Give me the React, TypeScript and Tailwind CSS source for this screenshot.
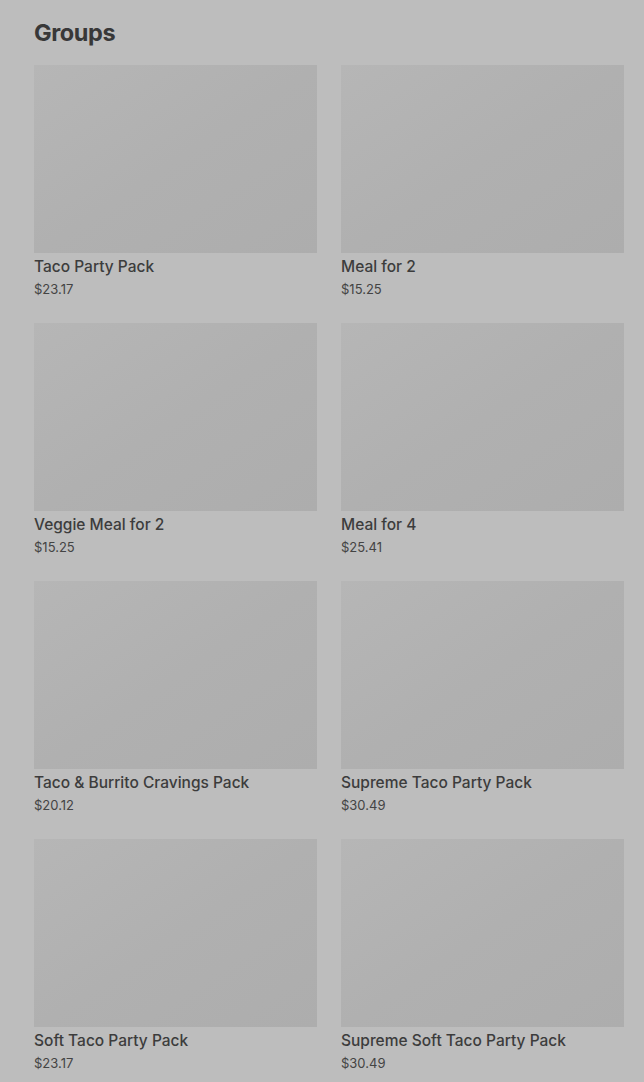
const groups = [
  { name: 'Taco Party Pack', price: '$23.17' },
  { name: 'Meal for 2', price: '$15.25' },
  { name: 'Veggie Meal for 2', price: '$15.25' },
  { name: 'Meal for 4', price: '$25.41' },
  { name: 'Taco & Burrito Cravings Pack', price: '$20.12' },
  { name: 'Supreme Taco Party Pack', price: '$30.49' },
  { name: 'Soft Taco Party Pack', price: '$23.17' },
  { name: 'Supreme Soft Taco Party Pack', price: '$30.49' },
];

function GroupCard({ name, price }: { name: string; price: string }) {
  return (
    <div className="flex flex-col">
      <div className="h-[188px] w-full bg-gradient-to-br from-[#b6b6b6] via-[#b0b0b0] to-[#adadad]" />
      <div className="mt-[4px] text-[15.5px] font-medium leading-[20px] text-[#3c3c3c]">{name}</div>
      <div className="mt-[4px] text-[13px] leading-[16px] text-[#444]">{price}</div>
    </div>
  );
}

export default function App() {
  return (
    <div
      className="min-h-[1082px] bg-[#bdbdbd] pl-[34px] pr-[20px] pt-[17px]"
      style={{ fontFamily: 'Inter, "Noto Sans", sans-serif' }}
    >
      <h2 className="text-[23.5px] font-bold leading-[32px] tracking-[-0.4px] text-[#383838]">Groups</h2>
      <div className="mt-[16px] grid grid-cols-2 gap-x-[24px] gap-y-[26px]">
        {groups.map((g) => (
          <GroupCard key={g.name} name={g.name} price={g.price} />
        ))}
      </div>
    </div>
  );
}
